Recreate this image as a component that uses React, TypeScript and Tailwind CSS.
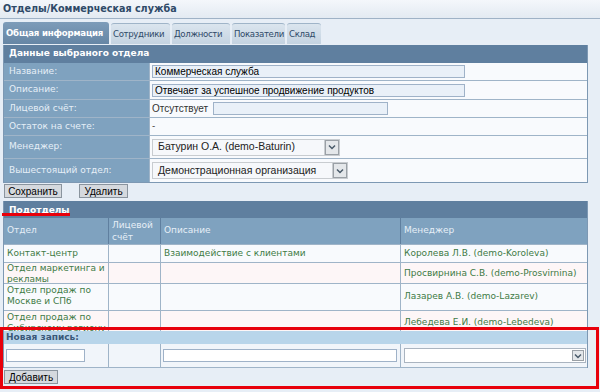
import React from 'react';

const labelCls = 'bg-[#7fa2bf] text-[#e6eff7] pl-[5px] flex items-center border-b border-[#9fb4c8] whitespace-nowrap';
const valueCls = 'bg-[#f8fafd] pl-[2px] flex items-center border-b border-[#9fb4c8] border-l border-l-[#9fb4c8]';
const arial = "font-['Liberation_Sans',Arial,sans-serif]";

const Field = ({ w, text }: { w: string; text?: string }) => (
  <div className={`${w} h-[13px] bg-[#e9f0f8] border border-[#9fb2c8] text-[10px] leading-[11px] pl-[2px] text-black whitespace-nowrap overflow-hidden ${arial}`}>{text}</div>
);

const Arrow = () => (
  <svg width="8" height="6" viewBox="0 0 8 6"><path d="M1 1.5 L4 4.5 L7 1.5" stroke="#4a5a6a" strokeWidth="1.5" fill="none" /></svg>
);

const Select = ({ w, text }: { w: string; text: string }) => (
  <div className={`${w} h-[17px] bg-[#c8ccd0] p-[1px] flex`}>
    <div className={`flex-1 bg-[#f6f8fb] flex items-center pl-[5px] text-[10.5px] text-[#222] whitespace-nowrap overflow-hidden ${arial}`}>{text}</div>
    <div className="w-[14px] bg-[#e4e7ea] border border-[#9aa0a6] flex items-center justify-center ml-[1px]">
      <Arrow />
    </div>
  </div>
);

const Btn = ({ children, w }: { children: React.ReactNode; w: string }) => (
  <div className={`${w} h-[14px] bg-[#d5d9de] border border-[#8a949e] flex items-center justify-center text-[10px] text-black ${arial}`}>{children}</div>
);

const rows = [
  { d: 'Контакт-центр', o: 'Взаимодействие с клиентами', m: 'Королева Л.В. (demo-Koroleva)', h: 'h-[18px]', bg: 'bg-[#f8fafd]', pad: 'flex items-center' },
  { d: 'Отдел маркетинга и\nрекламы', o: '', m: 'Просвирнина С.В. (demo-Prosvirnina)', h: 'h-[21px]', bg: 'bg-[#fdf6f7]', pad: 'pt-0' },
  { d: 'Отдел продаж по\nМоскве и СПб', o: '', m: 'Лазарев А.В. (demo-Lazarev)', h: 'h-[27px]', bg: 'bg-[#f8fafd]', pad: 'pt-[1px]' },
  { d: 'Отдел продаж по\nСибирскому региону', o: '', m: 'Лебедева Е.И. (demo-Lebedeva)', h: 'h-[21px]', bg: 'bg-[#fdf6f7]', pad: 'pt-[1px]' },
];

const cols = 'grid grid-cols-[104px_52px_240px_187px]';

export default function App() {
  return (
    <div className="w-[600px] h-[392px] bg-[#e7eef6] overflow-hidden relative font-['DejaVu_Sans',Verdana,sans-serif] text-[9px]">
      {/* title */}
      <div className="h-[19px] bg-gradient-to-b from-[#f4f7fb] to-[#e3eaf2] border-b border-[#9fb2c6] px-[3px] flex items-center">
        <span className="text-[9.6px] font-bold text-[#2f4a68]">Отделы/Коммерческая служба</span>
      </div>

      {/* tabs */}
      <div className="flex gap-[2px] pl-[3px] mt-[2px] h-[23px] items-end text-[8.6px]">
        <div className="h-[22px] w-[106px] rounded-t-[3px] bg-gradient-to-b from-[#7d9cb9] to-[#6686a5] text-white font-bold tracking-[-0.2px] flex items-center pl-[3px] whitespace-nowrap">Общая информация</div>
        {[
          ['Сотрудники', 'w-[59px]'],
          ['Должности', 'w-[58px]'],
          ['Показатели', 'w-[53px]'],
          ['Склад', 'w-[34px]'],
        ].map(([t, w]) => (
          <div key={t} className={`h-[21px] ${w} rounded-t-[3px] bg-gradient-to-b from-[#dbe5ee] to-[#c4d3e1] border-t border-[#9fb4c8] text-[#2f4a68] flex items-center pl-[2px] tracking-[-0.35px] whitespace-nowrap overflow-hidden`}>{t}</div>
        ))}
      </div>

      {/* panel */}
      <div className="mt-[1px] ml-[3px] w-[585px] border-x border-b border-[#7d98b3]">
        <div className="h-[18px] bg-[#5f7f9f] text-white font-bold pl-[5px] flex items-center">Данные выбраного отдела</div>
        <div className="grid grid-cols-[145px_1fr]">
          <div className={`${labelCls} h-[18px]`}>Название:</div>
          <div className={`${valueCls} h-[18px]`}><Field w="w-[313px]" text="Коммерческая служба" /></div>
          <div className={`${labelCls} h-[19px]`}>Описание:</div>
          <div className={`${valueCls} h-[19px]`}><Field w="w-[313px]" text="Отвечает за успешное продвижение продуктов" /></div>
          <div className={`${labelCls} h-[18px]`}>Лицевой счёт:</div>
          <div className={`${valueCls} h-[18px] gap-[5px]`}>
            <span className={`text-[10px] text-[#333] ${arial}`}>Отсутствует</span>
            <Field w="w-[175px]" />
          </div>
          <div className={`${labelCls} h-[18px]`}>Остаток на счете:</div>
          <div className={`${valueCls} h-[18px] text-[#333]`}>-</div>
          <div className={`${labelCls} h-[23px]`}>Менеджер:</div>
          <div className={`${valueCls} h-[23px]`}><Select w="w-[188px]" text="Батурин О.А. (demo-Baturin)" /></div>
          <div className={`${labelCls} h-[23px] border-b-0`}>Вышестоящий отдел:</div>
          <div className={`${valueCls} h-[23px] border-b-0`}><Select w="w-[196px]" text="Демонстрационная организация" /></div>
        </div>
      </div>
      <div className="flex gap-[17px] pl-[4px] mt-[1px]">
        <Btn w="w-[58px]">Сохранить</Btn>
        <Btn w="w-[49px]">Удалить</Btn>
      </div>

      {/* subdepartments */}
      <div className="ml-[3px] w-[585px] mt-[3px] border-x border-[#7d98b3]">
        <div className="h-[17px] bg-[#5f7f9f] text-white font-bold pl-[5px] pt-[3px]">Подотделы</div>
        <div className={`${cols} h-[26px] bg-[#7fa2bf] text-[#e6eff7]`}>
          <div className="pl-[3px] flex items-center">Отдел</div>
          <div className="pl-[3px] border-l border-[#5f7f9f] leading-[12px] pt-[1px]">Лицевой<br />счёт</div>
          <div className="pl-[3px] border-l border-[#5f7f9f] flex items-center">Описание</div>
          <div className="pl-[3px] border-l border-[#5f7f9f] flex items-center">Менеджер</div>
        </div>
        {rows.map(r => (
          <div key={r.d} className={`${cols} ${r.h} ${r.bg} border-t border-[#9fb4c8] text-[#3e7a45] overflow-hidden`}>
            <div className={`pl-[3px] leading-[11px] whitespace-pre-line ${r.pad}`}>{r.d}</div>
            <div className="border-l border-[#9fb4c8]" />
            <div className="border-l border-[#9fb4c8] pl-[3px] flex items-center whitespace-nowrap">{r.o}</div>
            <div className="border-l border-[#9fb4c8] pl-[3px] flex items-center whitespace-nowrap">{r.m}</div>
          </div>
        ))}
      </div>

      {/* new record */}
      <div className="ml-[3px] w-[585px] border-x border-[#7d98b3]">
        <div className="h-[13px] bg-[#b8d5ea] text-[#3a5878] font-bold pl-[2px] flex items-center">Новая запись:</div>
        <div className={`${cols} h-[24px] bg-[#f1f5fa] border-b border-[#9fb4c8]`}>
          <div className="flex items-center pl-[2px]"><div className="w-[79px] h-[13px] bg-white border border-[#9fb2c8]" /></div>
          <div className="border-l border-[#9fb4c8]" />
          <div className="border-l border-[#9fb4c8] flex items-center pl-[2px]"><div className="w-[234px] h-[13px] bg-white border border-[#9fb2c8]" /></div>
          <div className="border-l border-[#9fb4c8] flex items-center pl-[3px]">
            <div className="w-[182px] h-[15px] bg-white border border-[#aab4c0] flex justify-end items-center pr-[1px]">
              <div className="w-[12px] h-[11px] bg-[#e4e7ea] border border-[#9aa0a6] flex items-center justify-center">
                <Arrow />
              </div>
            </div>
          </div>
        </div>
      </div>
      <div className="pl-[4px] mt-[2px]">
        <Btn w="w-[54px]">Добавить</Btn>
      </div>

      {/* annotations */}
      <div className="absolute left-[2px] top-[213px] w-[68px] h-[3px] bg-[#e8000b]" />
      <div className="absolute left-0 top-[327px] w-[599px] h-[62px] border-[3px] border-[#e8000b]" />
    </div>
  );
}
